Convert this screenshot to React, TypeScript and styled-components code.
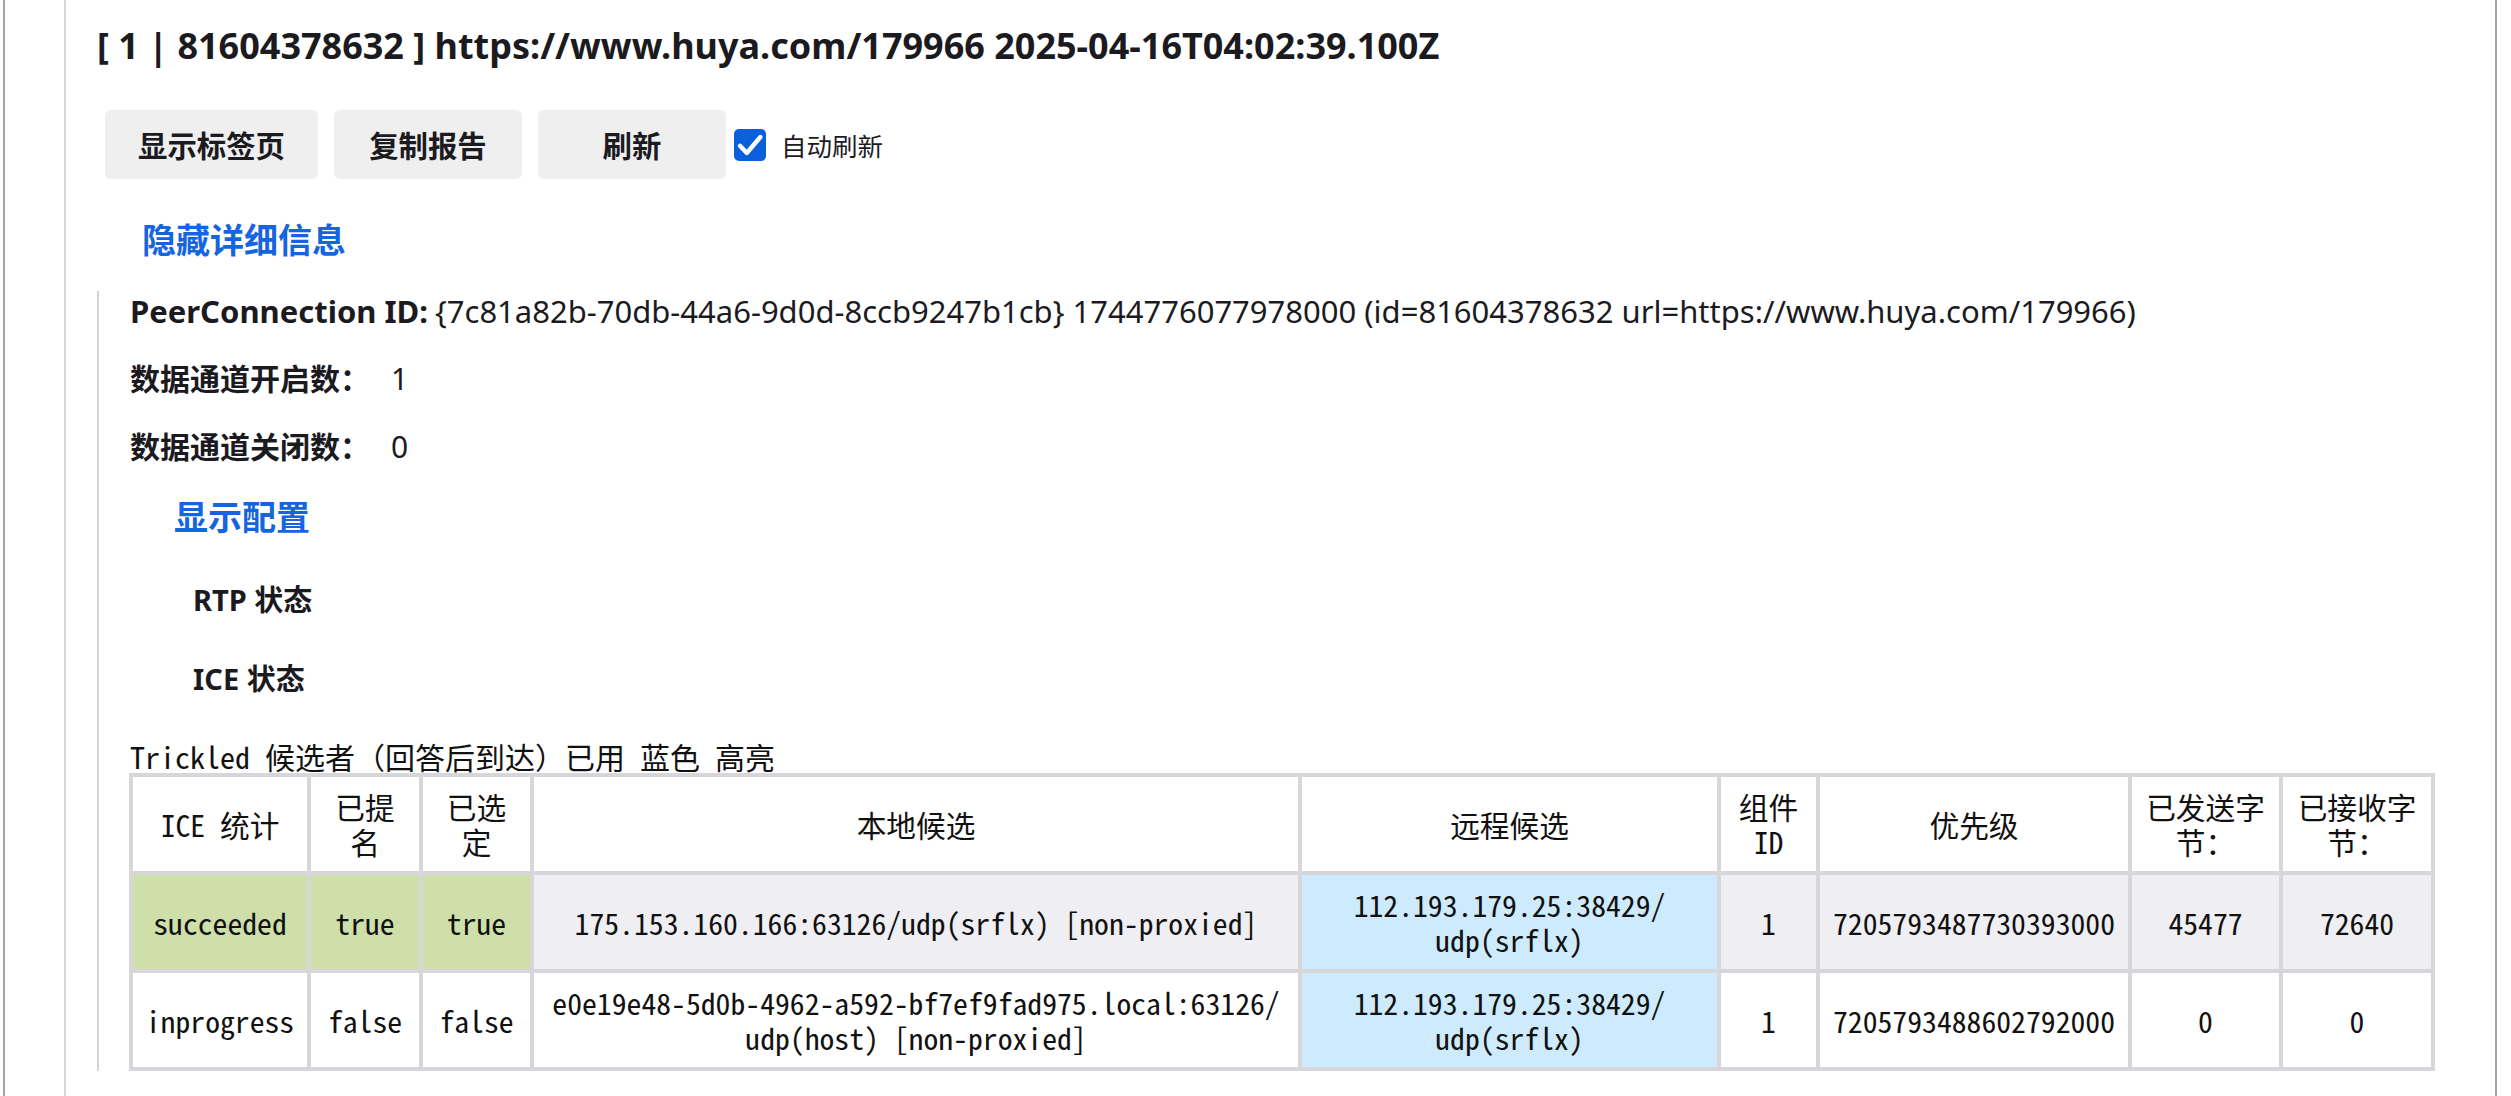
import React from "react";
import styled, { createGlobalStyle } from "styled-components";

const GlobalStyle = createGlobalStyle`
  html, body {
    margin: 0;
    padding: 0;
    background: #ffffff;
  }
  body {
    font-family: "Noto Sans", "Noto Sans CJK SC", sans-serif;
    color: #1b1b1f;
  }
`;

const monoStack = `"Noto Sans Mono CJK SC", "Liberation Mono", "Noto Sans CJK SC", monospace`;

const Frame = styled.div`
  margin-left: 3px;
  width: 2490px;
  height: 1096px;
  border-left: 2px solid #a4a4a8;
  border-right: 2px solid #a4a4a8;
  overflow: hidden;
`;

const Panel = styled.div`
  margin-left: 59px;
  min-height: 1096px;
  border-left: 2px solid #d4d4d9;
  padding: 22px 0 0 31px;
`;

const Title = styled.h2`
  margin: 0;
  font-size: 36px;
  line-height: 48px;
  font-weight: 700;
  white-space: nowrap;
`;

const Toolbar = styled.div`
  display: flex;
  align-items: center;
  gap: 16px;
  margin: 40px 0 0 8px;
`;

const Button = styled.button`
  height: 69px;
  min-width: 188px;
  padding: 0 33px;
  border: none;
  border-radius: 6px;
  background: #efefef;
  color: #1b1b1f;
  font-family: inherit;
  font-size: 29.4px;
  font-weight: 700;
`;

const CheckLabel = styled.label`
  display: flex;
  align-items: center;
  gap: 15px;
  margin-left: -8px;
  font-size: 25.5px;
`;

const CheckBox = styled.span`
  display: inline-flex;
  align-items: center;
  justify-content: center;
  width: 32px;
  height: 32px;
  border-radius: 5px;
  background: #0b5fdb;
`;

const Toggle = styled.div<{ $indent: number }>`
  margin-left: ${(p) => p.$indent}px;
  font-size: 34px;
  line-height: 44px;
  font-weight: 700;
  color: #1565e0;
  cursor: pointer;
`;

const Details = styled.div`
  margin-top: 29px;
  border-left: 2px solid #d4d4d9;
  padding-left: 31px;
`;

const Field = styled.div<{ $size: number }>`
  font-size: ${(p) => p.$size}px;
  line-height: 40px;
  margin-bottom: 28px;
  white-space: nowrap;
`;

const FieldLabel = styled.span<{ $gap: number }>`
  font-weight: 700;
  margin-right: ${(p) => p.$gap}px;
`;

const Section = styled.div<{ $top: number }>`
  margin: ${(p) => p.$top}px 0 0 63px;
  font-size: 29px;
  line-height: 40px;
  font-weight: 700;
`;

const Caption = styled.div`
  margin-top: 40px;
  font-family: ${monoStack};
  font-size: 30px;
  line-height: 34px;
  color: #111;
  white-space: nowrap;
`;

const Grid = styled.table`
  width: 2306px;
  margin-left: -1px;
  table-layout: fixed;
  border-collapse: collapse;
  border: 4px solid #d6d6db;
  font-family: ${monoStack};
  font-size: 29.7px;
  line-height: 35px;
  color: #111;
`;

const Cell = styled.td<{ $tone?: "ok" | "gray" | "blue" }>`
  border: 4px solid #d6d6db;
  padding: 12px 12px;
  text-align: center;
  vertical-align: middle;
  font-weight: 400;
  background: ${(p) =>
    p.$tone === "ok"
      ? "#cfdfaa"
      : p.$tone === "gray"
      ? "#efeff3"
      : p.$tone === "blue"
      ? "#cdebfc"
      : "#ffffff"};
`;

const HeadCell = styled(Cell).attrs({ as: "th" })``;

const colWidths = [178, 112, 111, 768, 419, 99, 312, 151, 152];

const headers = [
  "ICE 统计",
  "已提名",
  "已选定",
  "本地候选",
  "远程候选",
  "组件 ID",
  "优先级",
  "已发送字节：",
  "已接收字节：",
];

type Tone = "ok" | "gray" | "blue" | undefined;

const rows: { cells: React.ReactNode[]; tones: Tone[] }[] = [
  {
    cells: [
      "succeeded",
      "true",
      "true",
      "175.153.160.166:63126/udp(srflx) [non-proxied]",
      <>
        112.193.179.25:38429/<wbr />udp(srflx)
      </>,
      "1",
      "7205793487730393000",
      "45477",
      "72640",
    ],
    tones: ["ok", "ok", "ok", "gray", "blue", "gray", "gray", "gray", "gray"],
  },
  {
    cells: [
      "inprogress",
      "false",
      "false",
      <>
        e0e19e48-5d0b-4962-a592-bf7ef9fad975.local:63126/<wbr />udp(host) [non-proxied]
      </>,
      <>
        112.193.179.25:38429/<wbr />udp(srflx)
      </>,
      "1",
      "7205793488602792000",
      "0",
      "0",
    ],
    tones: [undefined, undefined, undefined, undefined, "blue", undefined, undefined, undefined, undefined],
  },
];

const App = () => {
  return (
    <>
      <GlobalStyle />
      <Frame>
        <Panel>
          <Title>[ 1 | 81604378632 ] https://www.huya.com/179966 2025-04-16T04:02:39.100Z</Title>

          <Toolbar>
            <Button>显示标签页</Button>
            <Button>复制报告</Button>
            <Button>刷新</Button>
            <CheckLabel>
              <CheckBox>
                <svg width="32" height="32" viewBox="0 0 16 16">
                  <path
                    d="M3 8.4 L6.4 12 L13.2 4"
                    fill="none"
                    stroke="#ffffff"
                    strokeWidth="2.2"
                    strokeLinecap="round"
                    strokeLinejoin="round"
                  />
                </svg>
              </CheckBox>
              自动刷新
            </CheckLabel>
          </Toolbar>

          <Toggle $indent={45} style={{ marginTop: 39 }}>
            隐藏详细信息
          </Toggle>

          <Details>
            <Field $size={31}>
              <FieldLabel $gap={7}>PeerConnection ID:</FieldLabel>
              {"{7c81a82b-70db-44a6-9d0d-8ccb9247b1cb} 1744776077978000 (id=81604378632 url=https://www.huya.com/179966)"}
            </Field>
            <Field $size={30}>
              <FieldLabel $gap={21}>数据通道开启数：</FieldLabel>1
            </Field>
            <Field $size={30}>
              <FieldLabel $gap={21}>数据通道关闭数：</FieldLabel>0
            </Field>

            <Toggle $indent={44}>显示配置</Toggle>

            <Section $top={41}>RTP 状态</Section>
            <Section $top={39}>ICE 状态</Section>

            <Caption>Trickled 候选者（回答后到达）已用 蓝色 高亮</Caption>
            <Grid>
              <colgroup>
                {colWidths.map((w, i) => (
                  <col key={i} style={{ width: w }} />
                ))}
              </colgroup>
              <thead>
                <tr>
                  {headers.map((h) => (
                    <HeadCell key={h}>{h}</HeadCell>
                  ))}
                </tr>
              </thead>
              <tbody>
                {rows.map((r, ri) => (
                  <tr key={ri}>
                    {r.cells.map((c, ci) => (
                      <Cell key={ci} $tone={r.tones[ci]}>
                        {c}
                      </Cell>
                    ))}
                  </tr>
                ))}
              </tbody>
            </Grid>
          </Details>
        </Panel>
      </Frame>
    </>
  );
};

export default App;
